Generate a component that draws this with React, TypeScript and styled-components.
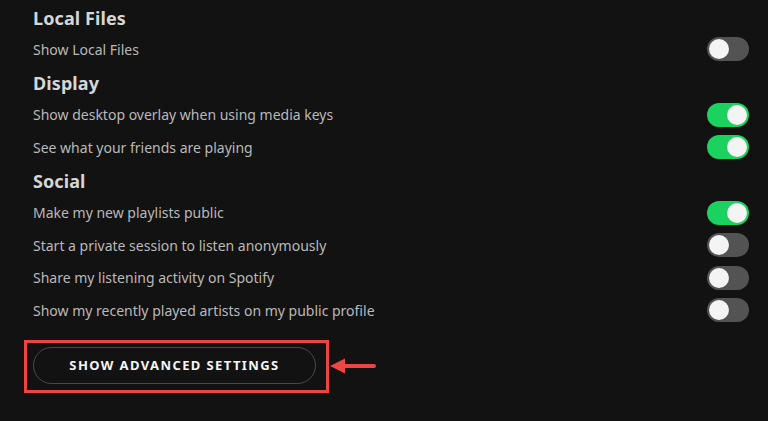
import React from 'react';
import styled, { createGlobalStyle } from 'styled-components';

const GlobalStyle = createGlobalStyle`
  html, body {
    margin: 0;
    padding: 0;
    background: #121212;
  }
  body {
    font-family: 'Noto Sans', 'Liberation Sans', sans-serif;
    -webkit-font-smoothing: antialiased;
  }
`;

const Page = styled.div`
  width: 768px;
  height: 421px;
  box-sizing: border-box;
  padding: 0 19px 0 33px;
  background: #121212;
  overflow: hidden;
`;

const SectionTitle = styled.h2`
  margin: 0;
  height: 33px;
  box-sizing: border-box;
  padding-top: 2px;
  display: flex;
  align-items: center;
  font-size: 18px;
  font-weight: 700;
  color: #d6d6d6;
  letter-spacing: 0.1px;
`;

const Row = styled.div`
  height: 32.5px;
  display: flex;
  align-items: center;
  justify-content: space-between;
`;

const Label = styled.span`
  font-size: 14px;
  color: #b9b9b9;
`;

const Track = styled.div<{ $on: boolean }>`
  width: 42px;
  height: 24px;
  border-radius: 12px;
  box-sizing: border-box;
  padding: 2px;
  display: flex;
  justify-content: ${p => (p.$on ? 'flex-end' : 'flex-start')};
  background: ${p => (p.$on ? '#1bd15f' : '#535353')};
`;

const Knob = styled.div`
  width: 20px;
  height: 20px;
  border-radius: 50%;
  background: #f4f4f4;
`;

const Footer = styled.div`
  display: flex;
  align-items: center;
  margin: 13px 0 0 -9px;
`;

const Highlight = styled.div`
  border: 3px solid #ef4444;
  padding: 4px 10px 6px 6px;
`;

const AdvancedButton = styled.button`
  width: 283px;
  height: 37px;
  border-radius: 19px;
  border: 1px solid #4a4a4a;
  background: transparent;
  color: #f5f5f5;
  font-family: 'Noto Sans', 'Liberation Sans', sans-serif;
  font-size: 13px;
  font-weight: 700;
  letter-spacing: 1.4px;
  text-transform: uppercase;
  cursor: pointer;
`;

const Arrow = styled.svg`
  display: block;
`;

type Item = { label: string; on: boolean };

const sections: { title: string; items: Item[] }[] = [
  { title: 'Local Files', items: [{ label: 'Show Local Files', on: false }] },
  {
    title: 'Display',
    items: [
      { label: 'Show desktop overlay when using media keys', on: true },
      { label: 'See what your friends are playing', on: true },
    ],
  },
  {
    title: 'Social',
    items: [
      { label: 'Make my new playlists public', on: true },
      { label: 'Start a private session to listen anonymously', on: false },
      { label: 'Share my listening activity on Spotify', on: false },
      { label: 'Show my recently played artists on my public profile', on: false },
    ],
  },
];

const Toggle = ({ on }: { on: boolean }) => (
  <Track $on={on}>
    <Knob />
  </Track>
);

export default function App() {
  return (
    <>
      <GlobalStyle />
      <Page>
        {sections.map(section => (
          <div key={section.title}>
            <SectionTitle>{section.title}</SectionTitle>
            {section.items.map(item => (
              <Row key={item.label}>
                <Label>{item.label}</Label>
                <Toggle on={item.on} />
              </Row>
            ))}
          </div>
        ))}
        <Footer>
          <Highlight>
            <AdvancedButton>Show Advanced Settings</AdvancedButton>
          </Highlight>
          <Arrow width="48" height="18" viewBox="0 0 48 18">
            <path d="M1 9 L16 1.5 L16 16.5 Z" fill="#ef4444" />
            <line x1="14" y1="9" x2="45" y2="9" stroke="#ef4444" strokeWidth="4" strokeLinecap="round" />
          </Arrow>
        </Footer>
      </Page>
    </>
  );
}
